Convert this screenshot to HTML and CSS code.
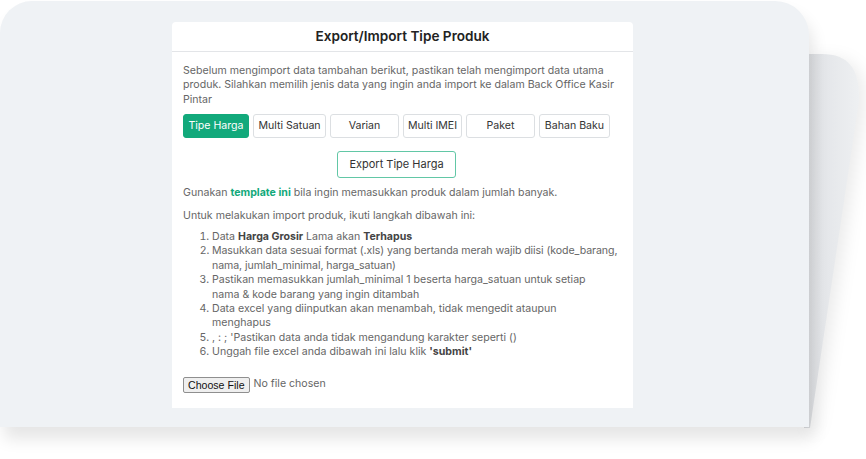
FILE: index.html
```html
<!DOCTYPE html>
<html lang="id">
<head>
<meta charset="utf-8">
<title>Export/Import Tipe Produk</title>
<link rel="stylesheet" href="styles.css">
</head>
<body>
<div class="stage">
  <svg class="backcard" width="70" height="400" viewBox="800 40 70 400" aria-hidden="true">
    <defs>
      <linearGradient id="bg" x1="0" y1="0" x2="1" y2="0">
        <stop offset="0" stop-color="#d8dadd"/>
        <stop offset="0.35" stop-color="#e4e6e9"/>
        <stop offset="1" stop-color="#eef0f2"/>
      </linearGradient>
    </defs>
    <path d="M804 53 L822 53 C850 53 860 70 859 100 L810 427 L804 427 Z" fill="url(#bg)"/>
  </svg>
  <div class="panel">
    <div class="card">
      <div class="card-head">Export/Import Tipe Produk</div>
      <div class="card-body">
        <p class="intro">Sebelum mengimport data tambahan berikut, pastikan telah mengimport data utama produk. Silahkan memilih jenis data yang ingin anda import ke dalam Back Office Kasir Pintar</p>
        <div class="switch">
          <div class="tabs">
            <span class="tab tab-66 active">Tipe Harga</span>
            <span class="tab tab-73">Multi Satuan</span>
            <span class="tab tab-69">Varian</span>
            <span class="tab tab-59">Multi IMEI</span>
            <span class="tab tab-69">Paket</span>
            <span class="tab tab-71">Bahan Baku</span>
          </div>
          <div class="export-row"><span class="export-btn">Export Tipe Harga</span></div>
        </div>
        <p class="line">Gunakan <b class="green">template ini</b> bila ingin memasukkan produk dalam jumlah banyak.</p>
        <p class="line">Untuk melakukan import produk, ikuti langkah dibawah ini:</p>
        <ol class="steps">
          <li>Data <b>Harga Grosir</b> Lama akan <b>Terhapus</b></li>
          <li class="tight">Masukkan data sesuai format (.xls) yang bertanda merah wajib diisi (kode_barang,<br>nama, jumlah_minimal, harga_satuan)</li>
          <li>Pastikan memasukkan jumlah_minimal 1 beserta harga_satuan untuk setiap<br>nama &amp; kode barang yang ingin ditambah</li>
          <li>Data excel yang diinputkan akan menambah, tidak mengedit ataupun<br>menghapus</li>
          <li>, : ; 'Pastikan data anda tidak mengandung karakter seperti ()</li>
          <li>Unggah file excel anda dibawah ini lalu klik <b>'submit'</b></li>
        </ol>
        <div class="file-row"><span class="file-btn">Choose File</span><span class="file-name">No file chosen</span></div>
      </div>
    </div>
  </div>
</div>
</body>
</html>
```

FILE: styles.css
```css
html, body {
  margin: 0;
  padding: 0;
  background: #ffffff;
}
body {
  width: 866px;
  height: 459px;
  overflow: hidden;
  font-family: "Inter", "DejaVu Sans", sans-serif;
}
.stage {
  position: relative;
  width: 866px;
  height: 459px;
}
.backcard {
  position: absolute;
  left: 800px;
  top: 40px;
  filter: drop-shadow(6px 4px 8px rgba(0,0,0,0.08));
}
.panel {
  position: relative;
  margin-top: 1px;
  width: 809px;
  height: 426px;
  box-sizing: border-box;
  padding: 21px 0 0 172px;
  background: #eff2f5;
  border-radius: 32px 34px 0 0;
  box-shadow: 4px 12px 16px rgba(0,0,0,0.10);
}
.card {
  width: 461px;
  background: #ffffff;
  border-radius: 4px 4px 0 0;
}
.card-head {
  height: 29px;
  line-height: 29px;
  border-bottom: 1px solid #e3e5e8;
  text-align: center;
  font-size: 13.6px;
  font-weight: 600;
  color: #222;
}
.card-body {
  padding: 12px 11px 15px 11px;
  font-size: 10.6px;
  line-height: 14.4px;
  color: #666666;
}
.intro {
  margin: 0;
}
.switch {
  width: fit-content;
  margin-top: 7px;
}
.tabs {
  display: flex;
  gap: 4px;
}
.tab {
  box-sizing: border-box;
  height: 24px;
  line-height: 22px;
  border: 1px solid #dcdfe2;
  border-radius: 3px;
  text-align: center;
  white-space: nowrap;
  color: #333;
  font-size: 10.6px;
}
.tab-59 { width: 59px; }
.tab-66 { width: 66px; }
.tab-69 { width: 69px; }
.tab-71 { width: 71px; }
.tab-73 { width: 73px; }
.tab.active {
  background: #12a97b;
  border-color: #12a97b;
  color: #fff;
}
.export-row {
  display: flex;
  justify-content: center;
  margin-top: 13px;
}
.export-btn {
  box-sizing: border-box;
  height: 27px;
  line-height: 25px;
  padding: 0 11px;
  border: 1px solid #62c7a6;
  border-radius: 3px;
  color: #333;
  font-size: 11px;
}
.line {
  margin: 8px 0 0 0;
}
.green {
  color: #12a97b;
  font-weight: 700;
}
.steps {
  margin: 7px 0 0 0;
  padding-left: 29px;
}
.steps li {
  white-space: nowrap;
}
.steps li.tight {
  letter-spacing: -0.08px;
}
.steps b {
  color: #444;
}
.file-row {
  margin-top: 17px;
  display: flex;
  align-items: center;
  height: 16px;
}
.file-btn {
  box-sizing: border-box;
  height: 16px;
  line-height: 14px;
  padding: 0 4px;
  border: 1px solid #8f8f8f;
  border-radius: 2px;
  background: #efefef;
  font-family: "Liberation Sans", Arial, sans-serif;
  font-size: 10.6px;
  color: #111;
}
.file-name {
  margin-left: 4px;
  color: #666;
  font-size: 10.6px;
}
```
